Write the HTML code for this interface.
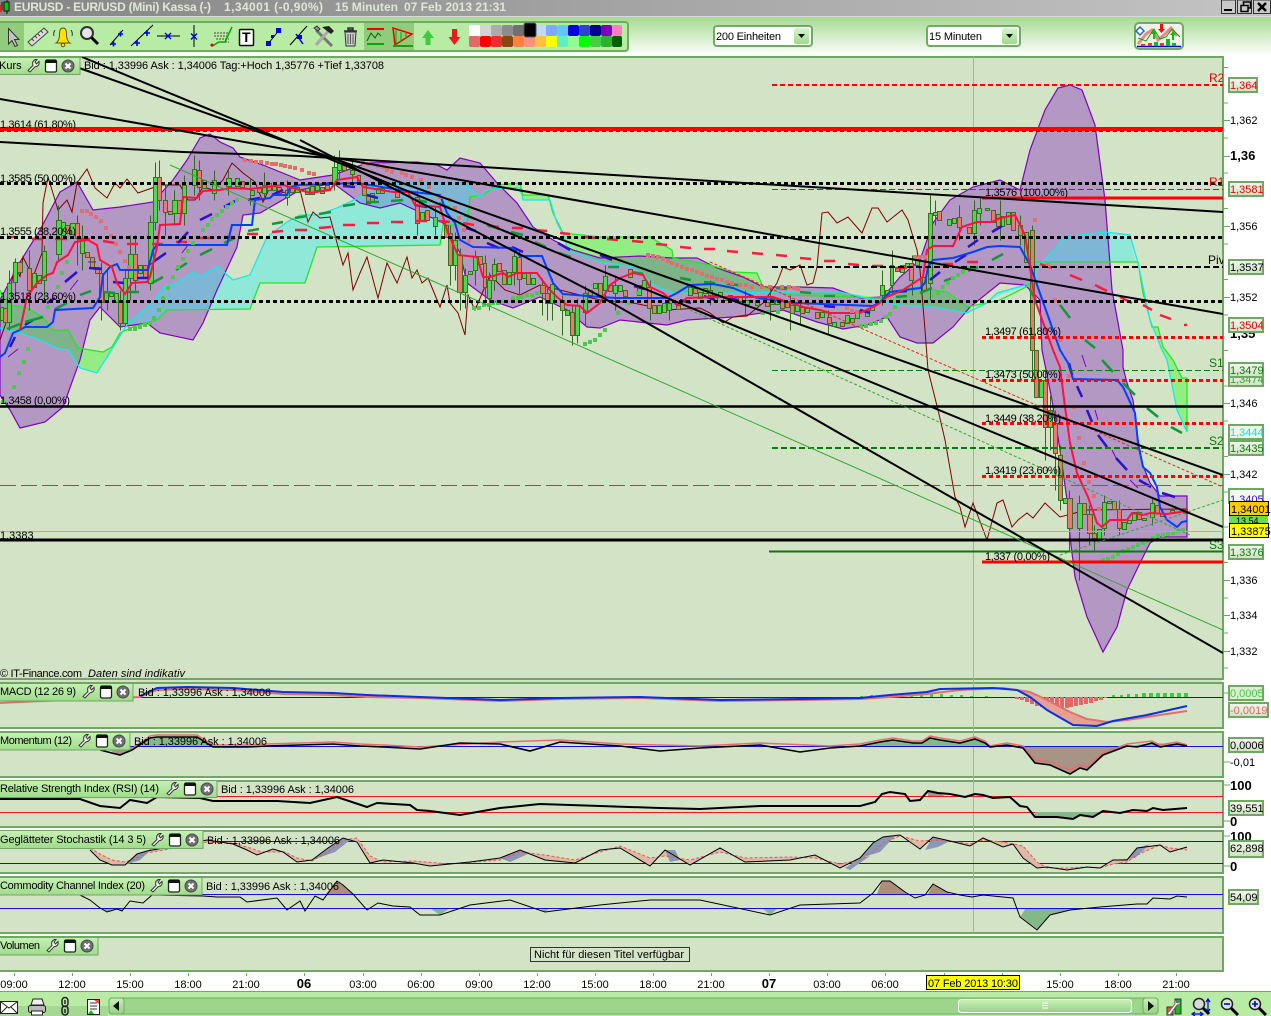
<!DOCTYPE html>
<html lang="de"><head><meta charset="utf-8"><title>EURUSD Chart</title>
<style>
html,body{margin:0;padding:0;background:#fff;overflow:hidden}
svg{display:block}
text{font-family:"Liberation Sans",sans-serif;font-size:11px;fill:#000}
.b{font-weight:bold;font-size:13px}
.box{fill:#d6e4ca;stroke:#6fa862;stroke-width:2}
.pl{fill:#d3e3c6;stroke:#6fa862;stroke-width:2}
.lab{fill:url(#lg);stroke:#6fa862;stroke-width:1}
.dot{fill:none;stroke:#000;stroke-width:3;stroke-dasharray:4 3}
.rd{fill:none;stroke:#f00;stroke-width:3;stroke-dasharray:4 3}
</style></head><body>
<svg xmlns="http://www.w3.org/2000/svg" width="1271" height="1016" viewBox="0 0 1271 1016">
<defs>
<linearGradient id="tg" x1="0" x2="1" y1="0" y2="0"><stop offset="0" stop-color="#858585"/><stop offset="1" stop-color="#c4c4c4"/></linearGradient>
<linearGradient id="tb" x1="0" x2="0" y1="0" y2="1"><stop offset="0" stop-color="#a6da90"/><stop offset="1" stop-color="#fff"/></linearGradient>
<linearGradient id="lg" x1="0" x2="0" y1="0" y2="1"><stop offset="0" stop-color="#c6f0b4"/><stop offset="1" stop-color="#a0dc8c"/></linearGradient>
<linearGradient id="bx" x1="0" x2="0" y1="0" y2="1"><stop offset="0" stop-color="#f4f8f0"/><stop offset="1" stop-color="#cfe0c2"/></linearGradient>
<linearGradient id="sc" x1="0" x2="0" y1="0" y2="1"><stop offset="0" stop-color="#c9f0b8"/><stop offset="1" stop-color="#95d283"/></linearGradient>
<linearGradient id="btn" x1="0" x2="0" y1="0" y2="1"><stop offset="0" stop-color="#d8f4cc"/><stop offset="1" stop-color="#9ed88a"/></linearGradient>
<clipPath id="mc"><rect x="0" y="57" width="1223" height="622"/></clipPath>
<polygon id="bb" points="0,300 20,262 40,230 60,192 77,182 93,210 120,207 153,202 173,180 187,160 200,138 210,134 220,142 233,148 240,157 263,165 300,180 333,175 367,163 417,162 437,165 447,170 460,158 480,163 497,183 517,203 533,227 553,240 573,250 600,258 640,256 673,258 697,258 717,268 743,277 763,287 800,287 833,288 860,298 883,297 900,277 920,260 933,223 950,200 973,187 1000,180 1020,190 1030,150 1045,110 1058,88 1070,85 1082,90 1095,125 1105,200 1112,290 1123,350 1123,367 1127,383 1133,400 1137,433 1142,463 1150,483 1160,496 1187,496 1187,537 1160,537 1150,543 1140,563 1127,590 1117,627 1103,652 1087,617 1075,577 1070,537 1068,507 1060,450 1052,400 1042,350 1040,300 1025,285 1000,283 970,307 953,327 933,343 917,343 900,337 887,317 867,325 843,329 817,322 783,310 733,317 687,320 667,325 620,320 600,328 587,327 567,310 540,297 513,308 490,300 467,283 460,253 443,223 400,203 380,208 360,203 333,183 300,190 260,213 243,215 237,247 217,290 203,323 193,340 160,333 147,323 120,327 100,307 90,320 80,360 63,407 45,422 20,428 10,410 0,395"/>
<clipPath id="bc"><use href="#bb"/></clipPath>
<path id="cg" d="M0 290L8 305 25 307 43 317 53 330 68 330 78 348 103 352 112 347 120 333 128 325 107 357 97 373 80 368 68 350 57 348 35 338 20 333 0 328ZM483 195L497 185 520 183 523 195 548 195 553 213 563 233 600 237 650 237 672 250 673 258 710 265 733 272 757 273 763 287 787 295 880 298 840 292 800 292 727 293 673 293 657 287 633 267 600 262 567 250 565 238 557 223 550 200 523 200 520 188 500 188 487 190ZM885 300L912 287 922 288 947 292 967 307 975 309 967 313 933 307 897 305ZM1138 262L1143 293 1152 327 1158 327 1163 347 1173 360 1182 378 1187 378 1187 432 1177 410 1167 360 1162 350 1150 320Z"/>
<path id="cc" d="M128 323L153 302 163 287 177 283 193 272 200 277 217 266 233 280 250 275 267 237 287 222 300 215 317 215 337 208 360 197 373 183 400 182 433 182 463 182 480 197 470 197 467 225 443 225 440 245 317 247 305 283 260 283 250 309 167 310 157 320 133 327ZM975 309L987 303 997 293 1025 285 1035 285 1040 265 1065 237 1105 232 1130 235 1135 260 1138 262 1035 262 1030 285 1000 295Z"/>
<g id="ic">
<path d="M1 11.5L6 6.5Q4.5 2 8.5 .5L10 .5 8 3 9.5 5 12 2.5Q13 7 8 7.8L3 13Z" fill="#f2f6ee" stroke="#333" stroke-width="1"/>
<rect x="18.5" y="1" width="11" height="12" rx="1.5" fill="#fff" stroke="#222" stroke-width="1.3"/><rect x="18.5" y="1" width="11" height="3" fill="#111"/>
<circle cx="41" cy="7" r="6" fill="#707070" stroke="#4a4a4a"/><path d="M38.5 4.5l5 5m0-5l-5 5" stroke="#fff" stroke-width="2"/>
</g>
</defs>

<!-- title bar -->
<rect x="0" y="0" width="1271" height="16" fill="url(#tg)"/>
<rect x="0" y="16" width="1271" height="1" fill="#d8d8d8"/>
<path d="M2 2v8" stroke="#111"/><rect x="0" y="5" width="2" height="7" fill="#e02020"/><path d="M7 0v14" stroke="#111"/><rect x="4" y="2" width="5" height="9" fill="#10c010" stroke="#111"/>
<text x="14" y="11" style="font-size:12px;font-weight:bold;fill:#dfe6d6" textLength="197">EURUSD - EUR/USD (Mini) Kassa (-)</text>
<text x="224" y="11" style="font-size:12px;font-weight:bold;fill:#dfe6d6" textLength="99">1,34001 (-0,90%)</text>
<text x="335" y="11" style="font-size:12px;font-weight:bold;fill:#dfe6d6" textLength="63">15 Minuten</text>
<text x="404" y="11" style="font-size:12px;font-weight:bold;fill:#dfe6d6" textLength="102">07 Feb 2013 21:31</text>
<g fill="#c8c8c8" stroke="#333" stroke-width="1">
<path d="M1221.500 0h14v13.500h-14z"/><path d="M1237.500 0h14v13.500h-14z"/><path d="M1253.500 0h17v13.500h-17z"/></g>
<path d="M1224 10h8" stroke="#000" stroke-width="2"/>
<path d="M1241 5.500h7v6h-7zM1243.500 5v-3h7v6h-2" fill="none" stroke="#000" stroke-width="1.500"/>
<path d="M1258 3l8 8m0-8l-8 8" stroke="#000" stroke-width="2.500"/>

<!-- toolbar -->
<rect x="0" y="17" width="1271" height="39" fill="url(#tb)"/>
<rect x="-4" y="22" width="632" height="29" rx="3" fill="#b8eca4" stroke="#72aa62" stroke-width="2"/>
<rect x="0" y="23" width="24" height="27" fill="#90cc7c"/>
<rect x="364" y="23" width="25" height="27" fill="#90cc7c"/><rect x="389" y="23" width="25" height="27" fill="#90cc7c"/>
<path d="M8.500 28.500V44l3.500-3.500 3 6 2.500-1-3-6H19Z" fill="#c4c4c4" stroke="#333"/>
<path d="M28 42L44 28l4 4-16 14Z" fill="#dcdcdc" stroke="#444"/><path d="M32 39l2 2M35 36l2 2M38 34l2 2M41 31l2 2" stroke="#444"/>
<path d="M56 43q3.500-2 3.500-9 0-6 3.500-6t3.500 6q0 7 3.500 9Z" fill="#ffe400" stroke="#665500"/><circle cx="63" cy="45" r="1.800" fill="#ffe400" stroke="#665500"/><path d="M55 30q-2 3-1 6M71 30q2 3 1 6" fill="none" stroke="#333"/>
<circle cx="87" cy="33" r="6" fill="#e6e6e6" stroke="#333" stroke-width="2"/><path d="M91.500 37.500L98 44" stroke="#000" stroke-width="3"/>
<path d="M110 45L123 30" stroke="#000"/><path d="M111 44h5m-2.500-2.500v5M118 34h5m-2.500-2.500v5" stroke="#00f" stroke-width="1.600"/>
<path d="M131 46L153 25" stroke="#000"/><path d="M134 43h6m-3-3v6M144 33h6m-3-3v6" stroke="#00f" stroke-width="1.600"/>
<path d="M157 36h23" stroke="#000"/><path d="M165 33l6 6m0-6l-6 6" stroke="#00f" stroke-width="1.400"/>
<path d="M194 25v22" stroke="#000"/><path d="M191 33.500l6 6m0-6l-6 6" stroke="#00f" stroke-width="1.400"/>
<path d="M214 33h15M214 36h15M216 39h13M222 42h7" stroke="#444" stroke-dasharray="2 1"/><path d="M211 45q1 2 3 0l5-3h6l7-15" fill="none" stroke="#0a0" stroke-width="1.500"/><circle cx="212" cy="45" r="1.500" fill="#e00"/>
<rect x="239.500" y="29.500" width="14" height="16" rx="1" fill="#fff" stroke="#111" stroke-width="1.500"/><text x="242" y="42" style="font-size:14px;font-weight:bold">T</text>
<path d="M268 44l12-15" stroke="#000"/><rect x="266" y="41" width="5" height="5" fill="#00d"/><rect x="276" y="28" width="5" height="5" fill="#00d"/><rect x="271" y="35" width="3" height="3" fill="#00d"/>
<path d="M290 45L307 26" stroke="#000"/><path d="M296 34L303 44" stroke="#00d" stroke-width="1.500"/><rect x="297" y="35" width="5" height="4" fill="#00d"/>
<path d="M316 30l16 16" stroke="#777" stroke-width="3"/><path d="M330 29L316 45" stroke="#aaa" stroke-width="3"/><path d="M322 27l7-1 5 5-3 3-4-3Z" fill="#222"/><path d="M314 28l4 3 2-2-3-3Z" fill="#999" stroke="#333"/>
<path d="M345 32h11l-1 14h-9Z" fill="#ccc" stroke="#333"/><path d="M344 31h13M348 28h5v2h-5z" fill="#999" stroke="#333" stroke-width="1.500"/><path d="M348 34v10M350.500 34v10M353 34v10" stroke="#555"/>
<path d="M367 29h17" stroke="#e00" stroke-width="2"/><path d="M367 44h17" stroke="#0a0" stroke-width="2"/><path d="M367 41l4-8 4 5 3-5 3 3" fill="none" stroke="#060"/>
<path d="M393 28l19 6-17 11Z" fill="none" stroke="#e00" stroke-width="1.500"/><path d="M393 46h20" stroke="#0a0" stroke-width="2"/><path d="M396 30v15M401 32v10M406 33v6" stroke="#0a0"/>
<path d="M428 30l6 8h-3.500v7h-5v-7H422Z" fill="#3ecb3e"/>
<path d="M452 29h5v8h3.500l-6 8-6-8h3.500Z" fill="#f01818"/>
<g>
<rect x="469" y="25" width="11" height="11" rx="2" fill="#fff"/><rect x="480" y="25" width="11" height="11" rx="2" fill="#d4d4d4"/><rect x="491" y="25" width="11" height="11" rx="2" fill="#acacac"/><rect x="502" y="25" width="11" height="11" rx="2" fill="#8c8c8c"/><rect x="513" y="25" width="11" height="11" rx="2" fill="#707070"/>
<rect x="535" y="25" width="11" height="11" rx="2" fill="#c4d8ff"/><rect x="546" y="25" width="11" height="11" rx="2" fill="#80a8ff"/><rect x="557" y="25" width="11" height="11" rx="2" fill="#60c8ff"/><rect x="568" y="25" width="11" height="11" rx="2" fill="#0000e0"/><rect x="579" y="25" width="11" height="11" rx="2" fill="#3040d0"/><rect x="590" y="25" width="11" height="11" rx="2" fill="#000090"/><rect x="601" y="25" width="11" height="11" rx="2" fill="#8000c0"/><rect x="612" y="25" width="10" height="11" rx="2" fill="#ff80c0"/>
<rect x="469" y="36" width="11" height="11" rx="2" fill="#e06868"/><rect x="480" y="36" width="11" height="11" rx="2" fill="#ff0000"/><rect x="491" y="36" width="11" height="11" rx="2" fill="#e83030"/><rect x="502" y="36" width="11" height="11" rx="2" fill="#8b4513"/><rect x="513" y="36" width="11" height="11" rx="2" fill="#ff8040"/><rect x="524" y="36" width="11" height="11" rx="2" fill="#ff9080"/><rect x="535" y="36" width="11" height="11" rx="2" fill="#ffc040"/><rect x="546" y="36" width="11" height="11" rx="2" fill="#ffff00"/><rect x="557" y="36" width="11" height="11" rx="2" fill="#60f0c0"/><rect x="568" y="36" width="11" height="11" rx="2" fill="#90ff90"/><rect x="579" y="36" width="11" height="11" rx="2" fill="#00ff00"/><rect x="590" y="36" width="11" height="11" rx="2" fill="#40d040"/><rect x="601" y="36" width="11" height="11" rx="2" fill="#30b030"/><rect x="612" y="36" width="10" height="11" rx="2" fill="#006000"/>
<rect x="524" y="23" width="12" height="14" rx="2" fill="#000" stroke="#555"/>
</g>
<rect x="714" y="26" width="98" height="20" rx="3" fill="#fff" stroke="#72aa62" stroke-width="2"/>
<text x="716" y="40" textLength="65">200 Einheiten</text>
<rect x="794" y="28" width="15" height="16" rx="2" fill="url(#btn)"/><path d="M798 34h7l-3.500 4Z" fill="#000"/>
<rect x="927" y="26" width="93" height="20" rx="3" fill="#fff" stroke="#72aa62" stroke-width="2"/>
<text x="929" y="40" textLength="53">15 Minuten</text>
<rect x="1002" y="28" width="15" height="16" rx="2" fill="url(#btn)"/><path d="M1006 34h7l-3.500 4Z" fill="#000"/>
<rect x="1135" y="23" width="48" height="26" rx="4" fill="#eef2ea" stroke="#72aa62" stroke-width="2"/>
<path d="M1138 44l8-10 6-4 6 10 7-6 6-6 6 8" fill="none" stroke="#e88" stroke-width="3"/><path d="M1138 38l8 3 8-12 6 10 6-2 6-8 8 8" fill="none" stroke="#0a0"/>
<path d="M1137 46.500h44" stroke="#00c" stroke-width="1.500"/><path d="M1141 44h4v2h-4zM1148 43h4v3h-4zM1160 43h4v3h-4z" fill="#e33"/><path d="M1154 42h4v4h-4zM1166 39h4v7h-4zM1172 43h4v3h-4z" fill="#1b1"/>
<path d="M1140 27l4 4-4 4-4-4Z" fill="#fff" stroke="#26c" stroke-width="1.500"/>
<path d="M1153 39v-5h-2l3-4 3 4h-2v5zM1172 40v-5h-2l3-4 3 4h-2v5z" fill="#1b1"/><path d="M1160 24h3v5h2l-3.500 4-3.500-4h2z" fill="#e11"/>

<!-- axis column -->
<rect x="1224" y="56" width="47" height="936" fill="#fff"/>
<!-- panels -->
<rect x="-2" y="57" width="1225" height="622" class="pl"/>
<rect x="-2" y="683" width="1225" height="45" class="pl"/>
<rect x="-2" y="732" width="1225" height="45" class="pl"/>
<rect x="-2" y="781" width="1225" height="46" class="pl"/>
<rect x="-2" y="831" width="1225" height="42" class="pl"/>
<rect x="-2" y="877" width="1225" height="56" class="pl"/>
<rect x="-2" y="937" width="1225" height="34" class="pl"/>
<rect x="0" y="680" width="1222" height="2" fill="#d3e3c6"/>
<path d="M973.500 57V933" stroke="#d89c8e"/>

<g clip-path="url(#mc)">
<!-- clouds -->
<use href="#cg" fill="#92ee82"/>
<use href="#cc" fill="#90e8d8"/>
<use href="#bb" fill="#b498c4"/>
<g clip-path="url(#bc)"><use href="#cg" fill="#7fb48a"/><use href="#cc" fill="#7fb6d6"/></g>
<use href="#bb" fill="none" stroke="#8000c0" stroke-width="1.200"/>
<!-- cloud edges -->
<g fill="none" stroke-width="1.300">
<polyline stroke="#22e822" points="0,290 8,305 25,307 43,317 53,330 68,330 78,348 103,352 112,347 120,333 133,327 157,320 167,310 250,309 260,283 305,283 317,247 440,245 443,225 467,225 470,197 483,195 497,185 520,183 523,195 548,195 553,213 563,233 600,237 650,237 672,250 673,258 710,265 733,272 757,273 763,287 787,295 880,298 912,287 922,288 947,292 967,307 1000,300 1030,285 1035,262 1138,262 1143,293 1152,327 1158,327 1163,347 1173,360 1182,378 1187,378 1187,432"/>
<polyline stroke="#18e8e8" points="0,328 20,333 35,338 57,348 68,350 80,368 97,373 107,357 128,323 153,302 163,287 177,283 193,272 200,277 217,266 233,280 250,275 267,237 287,222 300,215 317,215 337,208 360,197 373,183 463,182 480,197 487,190 500,188 520,188 523,200 550,200 557,223 565,238 567,250 600,262 633,267 657,287 673,293 727,293 800,292 840,292 897,305 933,307 967,313 987,303 997,293 1025,285 1040,265 1065,237 1105,232 1130,235 1138,263 1150,320 1162,350 1167,360 1177,410 1187,432"/>
</g>
<!-- chikou -->
<polyline fill="none" stroke="#800000" stroke-width="1" points="0,340 7,320 10,293 15,263 20,277 23,257 33,277 42,253 43,203 48,177 52,190 58,210 67,200 72,212 77,183 87,169 95,188 107,198 115,183 120,188 127,179 138,193 152,188 160,185 180,185 188,200 195,200 203,187 213,190 223,180 232,163 243,173 255,182 263,202 270,187 280,193 300,190 308,222 313,212 320,218 330,217 343,265 348,253 353,290 360,273 367,257 378,298 387,263 397,283 407,257 412,278 417,270 422,283 428,278 440,307 447,285 450,303 458,313 465,335 468,295 475,310 490,275 505,290 520,295 540,285 560,290 580,295 600,300 633,303 667,310 700,308 710,313 723,323 733,317 747,316 763,303 777,283 783,267 790,270 800,265 807,285 813,283 817,267 822,213 828,212 837,223 848,217 862,233 872,208 878,208 887,222 902,210 908,220 917,250 920,270 925,330 928,370 938,410 945,440 955,497 960,507 965,527 973,503 987,540 997,503 1003,500 1012,527 1018,520 1027,513 1033,518 1045,503 1060,517 1075,513 1085,510 1187,509"/>
<g transform="translate(.5 .5)">
<!-- wicks -->
<path fill="none" stroke="#2f6a1f" d="M9 270V330M15 258V300M29 250V310M44 245V300M58 205V262M77 215V265M82 225V270M101 262V320M107 270V310M120 290V330M125 270V325M130 235V300M135 235V290M150 215V290M155 162V230M159 160V210M165 185V235M174 190V225M184 175V225M194 155V195M199 160V200M214 170V200M228 170V195M250 178V205M264 172V200M287 180V205M334 155V190M339 150V178M352 160V185M417 190V235M435 205V235M450 225V285M455 232V280M460 248V310M465 268V308M475 250V285M485 255V300M489 272V310M494 258V290M514 250V285M519 250V295M542 278V315M547 285V320M552 278V320M562 295V335M572 305V345M577 298V343M585 285V325M605 265V300M615 275V310M650 280V320M669 295V320M710 280V305M745 290V315M770 288V320M790 295V330M800 300V325M828 310V335M882 270V305M892 250V295M912 255V295M930 195V300M935 200V225M959 205V240M974 200V245M980 198V225M1000 200V240M1020 215V245M1032 225V380M1045 370V460M1050 395V450M1055 410V490M1060 445V510M1069 490V550M1079 495V580M1089 505V545M1094 525V550M1104 495V535M1119 500V535M1152 497V525"/>
<!-- candle bodies -->
<path fill="#4fd84f" stroke="#3b6e20" d="M0 307h3v13h-3zM7 283h4v39h-4zM13 262h4v20h-4zM32 273h4v14h-4zM37 275h4v8h-4zM42 251h4v29h-4zM56 220h5v34h-5zM61 222h4v13h-4zM70 223h5v11h-5zM80 238h4v15h-4zM104 292h4v10h-4zM109 292h4v4h-4zM114 293h4v9h-4zM123 278h4v45h-4zM128 254h5v24h-5zM138 265h4v8h-4zM148 222h5v61h-5zM153 177h4v45h-4zM172 200h5v13h-5zM182 185h4v28h-4zM192 169h4v16h-4zM212 180h4v13h-4zM226 178h5v8h-5zM235 178h4v8h-4zM250 190h4v5h-4zM262 185h4v8h-4zM272 186h4v4h-4zM285 190h4v7h-4zM295 187h4v5h-4zM305 188h4v6h-4zM315 185h4v5h-4zM332 167h5v16h-5zM337 163h4v7h-4zM350 170h4v4h-4zM370 193h4v8h-4zM376 188h4v5h-4zM420 212h4v8h-4zM433 217h4v9h-4zM453 240h4v25h-4zM463 275h4v17h-4zM468 271h4v3h-4zM473 256h4v14h-4zM487 280h4v18h-4zM492 264h4v16h-4zM507 272h4v12h-4zM512 256h4v16h-4zM522 273h4v5h-4zM531 278h4v6h-4zM550 284h4v19h-4zM565 310h4v5h-4zM575 305h4v30h-4zM583 293h4v19h-4zM593 283h4v5h-4zM603 276h4v14h-4zM613 285h4v8h-4zM618 285h4v6h-4zM637 285h4v10h-4zM642 280h4v8h-4zM657 305h4v8h-4zM662 303h4v9h-4zM667 303h4v7h-4zM688 287h4v8h-4zM698 292h4v6h-4zM703 288h4v5h-4zM713 295h4v5h-4zM718 292h4v4h-4zM728 295h4v5h-4zM745 300h4v4h-4zM755 300h4v5h-4zM770 298h4v6h-4zM775 300h4v4h-4zM795 305h4v6h-4zM805 308h4v4h-4zM820 312h4v5h-4zM832 322h4v4h-4zM845 315h4v8h-4zM855 310h4v8h-4zM865 310h4v6h-4zM880 285h4v10h-4zM885 290h4v5h-4zM890 265h3v20h-3zM900 265h4v7h-4zM905 263h4v4h-4zM915 260h4v5h-4zM928 213h4v70h-4zM933 212h4v3h-4zM947 219h4v6h-4zM952 218h4v5h-4zM972 210h4v23h-4zM977 208h4v5h-4zM985 208h4v2h-4zM1001 216h3v10h-3zM1006 212h4v12h-4zM1024 232h4v30h-4zM1039 380h4v17h-4zM1048 410h4v17h-4zM1063 498h4v5h-4zM1077 503h5v25h-5zM1097 529h4v10h-4zM1102 502h4v26h-4zM1107 501h4v2h-4zM1122 522h4v7h-4zM1127 520h4v3h-4zM1132 512h4v8h-4zM1142 518h4v2h-4zM1150 503h4v14h-4zM1183 509h4v4h-4z"/>
<path fill="#e87a6e" stroke="#3b6e20" d="M3 308h4v14h-4zM17 262h5v10h-5zM27 268h4v22h-4zM65 225h4v8h-4zM75 223h4v15h-4zM85 252h4v5h-4zM90 257h4v10h-4zM95 267h4v6h-4zM99 273h4v29h-4zM118 302h4v21h-4zM133 254h4v26h-4zM143 265h4v12h-4zM157 177h4v23h-4zM163 200h4v12h-4zM168 211h4v3h-4zM177 200h4v13h-4zM197 170h4v17h-4zM202 180h4v8h-4zM240 181h4v6h-4zM257 188h4v4h-4zM267 183h4v7h-4zM277 187h4v6h-4zM290 188h4v4h-4zM310 186h4v8h-4zM320 187h4v6h-4zM325 185h4v4h-4zM342 163h4v7h-4zM357 175h3v8h-3zM362 183h4v12h-4zM366 195h4v8h-4zM380 188h4v5h-4zM395 190h4v7h-4zM415 197h4v26h-4zM425 210h4v10h-4zM444 225h4v12h-4zM448 233h4v32h-4zM457 255h5v37h-5zM478 256h4v8h-4zM483 263h3v24h-3zM497 263h4v8h-4zM502 270h4v14h-4zM517 257h4v22h-4zM526 272h4v12h-4zM540 285h5v8h-5zM545 293h4v10h-4zM560 300h4v10h-4zM570 312h4v23h-4zM588 290h4v5h-4zM598 283h4v12h-4zM608 285h4v6h-4zM623 290h4v6h-4zM628 269h4v8h-4zM647 287h4v21h-4zM652 305h4v8h-4zM676 305h4v4h-4zM693 288h4v5h-4zM708 290h4v5h-4zM723 296h4v4h-4zM738 297h4v4h-4zM765 302h4v4h-4zM780 300h4v8h-4zM785 302h4v5h-4zM790 305h4v8h-4zM800 307h4v6h-4zM815 312h4v6h-4zM827 317h4v6h-4zM840 322h4v4h-4zM850 318h4v4h-4zM870 305h4v5h-4zM895 267h4v4h-4zM909 263h4v17h-4zM922 277h4v13h-4zM937 211h4v9h-4zM957 217h4v10h-4zM967 227h4v6h-4zM991 210h4v12h-4zM996 214h4v12h-4zM1011 212h4v18h-4zM1018 225h4v10h-4zM1030 230h4v120h-4zM1034 350h4v47h-4zM1043 380h4v47h-4zM1053 423h4v30h-4zM1058 455h4v45h-4zM1067 498h5v30h-5zM1082 503h4v11h-4zM1087 514h5v19h-5zM1092 533h4v5h-4zM1112 501h4v8h-4zM1117 509h4v19h-4zM1137 512h4v7h-4zM1155 505h4v8h-4zM1160 513h4v3h-4zM1170 510h4v3h-4z"/>
</g>
<!-- thin purple dashes -->
<path stroke="#8000c0" fill="none" d="M8 357L18 349M70 290L78 280M88 262L96 262M150 265L158 258M182 253L188 245M1082 355L1086 367M1095 410L1098 420M1112 450L1116 458M1130 480L1138 488"/>
<!-- red ma dashes -->
<path fill="none" stroke="#ff1a40" stroke-width="2.500" d="M7 237H18M32 239H43M55 239H67M78 239H90M103 241L115 243M127 244H138M152 244H163M176 242H187M200 238H211M224 237H235M247 234H258M272 232L283 231M295 230H307M319 228L331 227M343 225H355M367 223H379M391 222H403M415 221H427M439 221L450 222M463 223L474 225M488 226L499 227M512 228H523M535 230L547 231M560 233L570 234M583 237L595 238M607 239L618 240M632 241L643 242M656 244L667 245M680 247L691 248M704 249H715M727 251L738 252M752 253L763 254M776 255L787 256M800 258L811 259M824 261H835M848 264L859 265M872 266H883M896 268H907M943 264H953M967 262H978M1040 264L1052 268M1070 275L1082 280M1095 285L1107 291M1120 297L1132 303M1143 305L1152 310M1160 315L1171 319M1184 325H1187"/>
<!-- blue dashes -->
<path fill="none" stroke="#3010c8" stroke-width="2.500" d="M10 347L15 337M25 325L33 320M47 303L55 298M65 282L77 272M89 268L102 269M113 282L124 283M137 278L149 278M153 262L166 253M178 243L188 232M200 220L212 214M224 207L235 201M248 200L260 198M272 195L283 190M319 185L331 183M343 186L355 187M367 195L378 198M415 205L427 207M466 228L476 231M487 243L499 248M512 247L523 252M558 243L570 250M600 255L612 260M634 286L645 289M680 300L691 303M704 296L715 300M727 298L738 300M824 306L835 307M860 310L870 313M896 292L907 291M930 280L940 272M955 262L966 255M968 247L978 240M992 232L1002 226M1069 363L1072 375M1077 386L1082 397M1087 410L1092 422M1098 435L1107 447M1116 458L1127 470M1139 480L1151 487M1162 493L1175 497"/>
<!-- green dashes -->
<path fill="none" stroke="#14963a" stroke-width="2.500" d="M7 329L20 324M25 322L43 317M55 309L67 303M80 295L91 291M104 292L115 293M128 292L139 292M152 283L163 277M176 270L187 263M200 255L212 249M224 243L235 238M248 231L259 229M272 224L283 222M295 218L307 216M319 214L331 212M343 206L355 204M367 202H379M391 201L403 200M416 200L427 202M439 203L450 208M464 215L475 219M487 225L499 229M511 232L523 235M535 242L546 247M559 253L571 257M608 267H619M632 272L643 274M680 278L691 280M704 282L715 283M727 284L738 285M776 288L787 289M800 292L811 293M824 296H835M896 297L907 296M920 293L932 288M944 281L955 277M968 271L978 267M992 260L1003 254M1030 290L1036 300M1060 305L1070 318M1085 340L1095 348M1102 360L1113 372M1123 383L1135 395M1147 408L1158 417M1171 427L1182 433"/>
<!-- ma lines -->
<polyline fill="none" stroke="#0040ff" stroke-width="2" points="0,357 5,353 13,333 20,330 25,327 47,327 53,322 55,310 93,308 100,297 103,275 110,267 117,264 120,270 148,270 153,250 157,245 227,245 232,225 252,225 255,200 270,198 273,195 287,195 290,187 300,185 357,183 413,192 440,195 447,213 455,223 460,240 473,247 513,248 520,256 542,256 553,283 563,294 600,297 617,298 667,298 677,293 690,285 713,284 733,288 757,298 797,303 873,306 880,302 890,292 920,288 925,283 928,267 933,260 953,258 973,252 987,247 1000,246 1020,247 1030,265 1060,350 1068,363 1073,379 1117,380 1123,387 1130,402 1135,413 1138,443 1143,467 1150,473 1157,487 1160,507 1167,520 1177,527 1182,522 1187,521"/>
<polyline fill="none" stroke="#ff1040" stroke-width="2" points="20,330 27,297 37,283 47,275 53,273 57,262 68,255 75,242 88,240 97,245 100,260 112,267 117,283 125,294 132,283 147,282 150,277 157,247 160,225 180,224 183,197 197,198 203,191 220,190 230,188 250,189 283,185 300,190 310,193 330,190 337,180 357,177 363,187 393,192 408,192 415,205 440,207 448,233 458,255 477,257 483,277 490,277 503,273 508,277 517,273 537,273 548,288 557,297 567,305 580,306 587,313 600,303 610,285 620,278 633,273 643,275 650,287 663,293 677,305 687,298 713,297 750,297 773,297 803,307 820,310 830,313 860,313 877,305 887,297 903,290 923,277 927,250 933,246 953,246 962,227 977,222 992,222 1000,218 1015,215 1025,235 1035,300 1053,350 1060,367 1065,407 1070,443 1077,473 1088,497 1097,523 1102,527 1110,520 1127,520 1132,513 1143,515 1150,513 1167,514 1187,511"/>
<!-- PSAR squares -->
<path fill="none" stroke="#4cc84c" stroke-width="4" d="M1 402h4M12 387h4M17 373h4M22 362h4M26 349h4M46 307h4M56 287h4M60 273h4M65 262h4M128 329h4M133 329h4M138 327h4M143 325h4M148 323h4M152 318h4M157 310h4M161 298h4M166 288h4M171 277h4M176 267h4M181 259h4M186 251h4M191 243h4M196 237h4M201 230h4M206 225h4M210 219h4M215 215h4M220 211h4M225 207h4M230 203h4M235 200h4M472 308h4M477 308h4M482 305h4M487 305h4M491 303h4M496 303h4M501 302h4M511 298h4M516 298h4M520 297h4M525 295h4M530 295h4M535 293h4M583 344h4M588 342h4M593 340h4M598 335h4M603 330h4M616 313h4M626 303h4M636 293h4M761 313h4M766 312h4M776 312h4M859 326h4M864 326h4M869 324h4M874 323h4M879 321h4M884 317h4M888 314h4M893 307h4M936 293h4M941 287h4M946 283h4M951 278h4M956 275h4M961 272h4M966 268h4M1101 560h4M1106 559h4M1111 557h4M1116 554h4M1121 551h4M1126 549h4M1131 547h4M1136 545h4M1141 543h4M1146 541h4M1151 538h4M1156 536h4M1161 535h4M1166 534h4M1171 533h4M1176 531h4M1181 530h4"/>
<path fill="none" stroke="#e07070" stroke-width="4" d="M80 211h4M85 211h4M89 214h4M94 217h4M99 221h4M104 228h4M109 236h4M114 244h4M118 252h4M123 261h4M127 267h4M243 160h4M249 161h4M254 162h4M259 162h4M265 163h4M270 164h4M274 164h4M279 165h4M283 166h4M288 167h4M293 168h4M300 170h4M307 173h4M312 174h4M361 163h4M366 164h4M376 166h4M381 167h4M385 170h4M390 172h4M400 173h4M404 175h4M410 177h4M419 180h4M427 187h4M438 197h4M448 200h4M453 208h4M457 218h4M462 230h4M467 241h4M646 255h4M651 256h4M656 257h4M661 259h4M666 261h4M670 263h4M675 265h4M680 267h4M685 269h4M690 270h4M695 272h4M700 274h4M705 276h4M710 277h4M715 279h4M720 280h4M725 282h4M730 283h4M738 285h4M744 285h4M750 287h4M760 287h4M768 287h4M780 287h4M787 287h4M792 288h4M796 289h4M845 308h4M850 311h4M855 312h4M913 257h4M918 257h4M923 257h4M1033 220h4M1046 265h4M1053 300h4M1058 340h4M1067 376h4M1072 407h4M1077 438h4M1082 463h4M1087 482h4M1092 496h4M1097 509h4"/>
<!-- horizontal levels -->
<path d="M0 485.500H1223" fill="none" stroke="#a04a40" stroke-dasharray="16 5"/>
<path d="M0 531.500H1223" fill="none" stroke="#d89c8e"/>
<path d="M0 131H1223" fill="none" stroke="#000" stroke-width="1.500" stroke-dasharray="4 3"/>
<path d="M0 129H1223" fill="none" stroke="#f00" stroke-width="4"/>
<path d="M0 183.500H1223M0 237.500H1223M0 301.500H1223" class="dot"/>
<path d="M772 85H1223" fill="none" stroke="#f00" stroke-width="2" stroke-dasharray="5 3"/>
<path d="M772 189.500H1223" fill="none" stroke="#f00" stroke-dasharray="6 3"/>
<path d="M982 198H1223" fill="none" stroke="#f00" stroke-width="3"/>
<path d="M772 267H1223" fill="none" stroke="#000" stroke-width="2" stroke-dasharray="6 3"/>
<path d="M982 337.500H1223M982 380.500H1223M982 423.500H1223M982 476.500H1223" class="rd"/>
<path d="M772 370.500H1223" fill="none" stroke="#0a7a0a" stroke-dasharray="6 3"/>
<path d="M772 448H1223" fill="none" stroke="#0a7a0a" stroke-width="2" stroke-dasharray="6 3"/>
<path d="M769 551.500H1223" fill="none" stroke="#0a7a0a" stroke-width="2"/>
<path d="M982 562H1223" fill="none" stroke="#f00" stroke-width="3"/>
<path d="M0 406.500H1223" fill="none" stroke="#000" stroke-width="2.500"/>
<path d="M0 540H1223" fill="none" stroke="#000" stroke-width="3"/>
<!-- thin trend lines -->
<path d="M170 165L1223 630" fill="none" stroke="#34a834"/>
<path d="M690 310L1190 535" fill="none" stroke="#34a834" stroke-dasharray="3 2"/>
<path d="M1060 555L1223 500" fill="none" stroke="#34a834" stroke-dasharray="3 2"/>
<path d="M710 262L1223 487" fill="none" stroke="#f02020" stroke-dasharray="3 2"/>
<!-- black trend lines -->
<g fill="none" stroke="#000" stroke-width="2">
<path d="M0 99L1223 314"/>
<path d="M0 142L183 152 300 156 1223 212"/>
<path d="M68 64L1223 475"/>
<path d="M82 57L1223 527"/>
<path d="M300 140L600 296 1223 653"/>
</g>
<!-- labels -->
<text x="0" y="128" textLength="76">1,3614 (61,80%)</text>
<text x="0" y="182" textLength="76">1,3585 (50,00%)</text>
<text x="0" y="235" textLength="76">1,3555 (38,20%)</text>
<text x="0" y="300" textLength="76">1,3518 (23,60%)</text>
<text x="0" y="404" textLength="70">1,3458 (0,00%)</text>
<text x="0" y="539">1,3383</text>
<text x="985" y="196" textLength="83">1,3576 (100,00%)</text>
<text x="985" y="335" textLength="76">1,3497 (61,80%)</text>
<text x="985" y="378" textLength="76">1,3473 (50,00%)</text>
<text x="985" y="422" textLength="76">1,3449 (38,20%)</text>
<text x="985" y="474" textLength="76">1,3419 (23,60%)</text>
<text x="985" y="560" textLength="65">1,337 (0,00%)</text>
<text x="1209" y="82" style="font-size:12px;fill:#e00">R2</text>
<text x="1209" y="186" style="font-size:12px;fill:#e00">R1</text>
<text x="1208" y="264" style="font-size:12px">Piv</text>
<text x="1209" y="367" style="font-size:12px;fill:#0a7a0a">S1</text>
<text x="1209" y="445" style="font-size:12px;fill:#0a7a0a">S2</text>
<text x="1209" y="549" style="font-size:12px;fill:#0a7a0a">S3</text>
<text x="0" y="677" textLength="82">© IT-Finance.com</text>
<text x="88" y="677" style="font-style:italic" textLength="97">Daten sind indikativ</text>
</g>

<!-- MACD -->
<path d="M0 697.500H1223" stroke="#1010e0" fill="none"/>
<path d="M1015 697h4v2h-4zM1020 697h4v3h-4zM1025 697h4v5h-4zM1030 697h4v7h-4zM1035 697h4v9h-4zM1040 697h4v10h-4zM1045 697h4v11h-4zM1050 697h4v11h-4zM1055 697h4v12h-4zM1060 697h4v12h-4zM1065 697h4v11h-4zM1069 697h4v10h-4zM1074 697h4v9h-4zM1079 697h4v8h-4zM1084 697h4v7h-4zM1089 697h4v6h-4zM1094 697h4v4h-4zM1099 697h4v3h-4zM1104 697h3v1h-3z" fill="#e06868"/>
<path d="M860 696h3v1h-3zM870 695h3v2h-3zM880 695h3v2h-3zM890 695h3v2h-3zM900 695h3v2h-3zM910 695h3v2h-3zM920 694h3v3h-3zM930 694h3v3h-3zM940 694h3v3h-3zM950 695h3v2h-3zM960 695h3v2h-3zM970 696h3v1h-3zM985 696h3v1h-3zM1112 695h3v2h-3zM1120 695h3v2h-3zM1127 694h3v3h-3zM1135 694h3v3h-3zM1142 693h4v4h-4zM1149 693h4v4h-4zM1156 693h4v4h-4zM1163 693h4v4h-4zM1170 693h4v4h-4zM1177 693h4v4h-4zM1184 693h4v4h-4z" fill="#44c844"/>
<path fill="#e8a090" d="M1017 690L1030 692 1043 698 1070 712 1087 719 1107 722 1097 726 1073 725 1047 710 1030 697Z"/>
<polyline fill="none" stroke="#e07070" stroke-width="2" points="0,703 20,702 140,697 157,690 187,689 233,690 283,694 333,695 367,697 420,698 500,701 560,699 640,698 720,701 800,700 860,699 890,697 927,694 960,690 1003,688 1030,692 1043,698 1070,712 1087,719 1107,722 1127,720 1160,715 1187,711"/>
<polyline fill="none" stroke="#0a30e0" stroke-width="2" points="140,696 157,688 187,687 233,688 283,692 333,693 367,695 420,697 500,700 560,698 640,697 720,700 800,699 860,698 890,695 927,692 940,689 993,688 1017,690 1030,697 1047,710 1073,725 1097,726 1113,721 1147,715 1187,706"/>

<!-- Momentum -->
<path fill="#84b888" d="M133 746L150 738 157 737 177 737 197 737 213 746ZM860 746L880 742 893 740 923 743 930 738 960 743 975 739 990 746ZM1127 746L1152 743 1177 744 1187 746Z"/>
<path fill="#a89484" d="M100 746L120 755 132 750 133 746ZM1023 746L1035 763 1050 765 1070 774 1080 768 1087 770 1103 755 1127 746Z"/>
<path d="M0 746.500H1223" stroke="#1010e0" fill="none"/>
<polyline fill="none" stroke="#e07070" stroke-width="1.500" points="133,748 150,736 157,735 177,735 197,735 213,745 247,745 267,744 300,743 333,742 360,744 383,745 420,747 500,742 560,740 620,744 700,746 760,743 830,746 860,744 880,740 893,738 913,741 922,741 930,736 940,738 960,741 975,737 985,741 990,746 1007,743 1023,746 1035,760 1050,762 1070,770 1080,765 1087,767 1103,753 1127,744 1152,741 1160,745 1177,742 1187,745"/>
<polyline fill="none" stroke="#000" stroke-width="1.600" points="100,750 120,755 132,750 150,738 157,737 177,737 197,737 213,747 247,747 267,746 300,745 333,744 360,746 383,747 420,749 460,743 500,744 530,751 560,742 620,746 660,751 700,748 760,745 800,752 830,748 860,746 880,742 893,740 913,743 922,743 930,738 940,740 960,743 975,739 985,743 990,747 1007,745 1023,748 1035,763 1050,765 1070,774 1080,768 1087,770 1103,755 1127,746 1137,747 1152,743 1160,747 1177,744 1187,746"/>

<!-- RSI -->
<path d="M0 796.500H1223M0 812.500H1223" stroke="#f01818" fill="none"/>
<path fill="#84b888" d="M1035 812L1035 817 1057 817 1073 819 1080 815 1093 817 1103 812Z"/>
<path fill="#a89484" d="M928 796L928 791 938 793 945 796Z"/>
<polyline fill="none" stroke="#000" stroke-width="2" points="0,799 30,799 80,799 100,806 120,808 130,800 147,803 157,797 200,798 213,801 250,801 277,801 310,803 337,797 367,807 377,803 410,805 417,810 430,811 460,815 500,808 540,804 600,806 660,808 700,809 760,806 800,806 860,806 875,802 882,794 890,792 905,794 910,801 920,800 928,791 938,793 950,794 965,797 975,794 983,795 993,798 1010,797 1020,806 1027,807 1035,817 1057,817 1073,819 1080,815 1093,817 1103,811 1120,813 1133,810 1147,811 1153,808 1163,810 1187,808"/>

<!-- Stoch -->
<path d="M0 841.500H1223M0 863.500H1223" stroke="#1010e0" fill="none"/>
<polygon fill="#dfb9a6" points="90,850 100,860 112,865 125,865 137,854 147,851 207,840 233,844 247,850 257,855 273,849 283,852 297,862 312,860 328,848 343,838 357,842 370,863 383,860 413,863 430,866 470,862 500,858 520,850 545,860 575,863 600,850 620,848 650,866 665,850 690,865 720,848 745,862 790,860 815,855 840,868 860,858 873,843 883,837 900,835 920,849 933,837 950,841 970,846 983,838 1003,847 1013,844 1023,858 1037,868 1047,867 1067,870 1087,867 1100,868 1113,860 1127,860 1137,848 1160,845 1170,852 1187,847 1187,850 1170,848 1160,845 1137,855 1127,862 1113,864 1100,868 1087,867 1067,868 1047,868 1037,862 1023,846 1003,842 983,840 970,844 950,841 933,840 920,841 900,836 883,843 873,852 860,860 840,864 815,858 790,857 745,858 720,852 690,860 665,856 650,858 620,846 600,852 575,860 545,855 520,852 500,860 450,864 413,861 383,862 370,856 357,838 343,840 328,852 312,861 297,858 285,852 262,852 247,847 233,843 207,842 147,853 137,858 125,862 112,860 100,854 90,848"/>
<path fill="#8898b8" d="M125 865L137 854 147 851 155 846 140 860ZM312 860L328 848 343 838 350 840 335 852ZM860 858L873 843 883 837 895 836 880 852ZM925 850L933 837 950 841 938 847ZM1113 860L1127 860 1137 848 1150 844 1135 858ZM845 868L860 858 870 856 850 870ZM500 858L520 850 530 853 510 862ZM665 850L675 850 680 860 670 862Z"/>
<polyline fill="none" stroke="#e85858" stroke-dasharray="3 2" points="90,848 100,854 112,860 125,862 137,858 147,853 207,842 233,843 247,847 262,852 285,852 297,858 312,861 328,852 343,840 357,838 370,856 383,862 413,861 450,864 500,860 520,852 545,855 575,860 600,852 620,846 650,858 665,856 690,860 720,852 745,858 790,857 815,858 840,864 860,860 873,852 883,843 900,836 920,841 933,840 950,841 970,844 983,840 1003,842 1023,846 1037,862 1047,868 1067,868 1087,867 1100,868 1113,864 1127,862 1137,855 1160,845 1170,848 1187,850"/>
<polyline fill="none" stroke="#000" points="90,850 100,860 112,865 125,865 137,854 147,851 207,840 233,844 247,850 257,855 273,849 283,852 297,862 312,860 328,848 343,838 357,842 370,863 383,860 413,863 430,866 470,862 500,858 520,850 545,860 575,863 600,850 620,848 650,866 665,850 690,865 720,848 745,862 790,860 815,855 840,868 860,858 873,843 883,837 900,835 920,849 933,837 950,841 970,846 983,838 1003,847 1013,844 1023,858 1037,868 1047,867 1067,870 1087,867 1100,868 1113,860 1127,860 1137,848 1160,845 1170,852 1187,847"/>

<!-- CCI -->
<path fill="#84b888" d="M100 908L107 912 117 909 122 911 125 908ZM430 908L440 915 450 908ZM540 908L545 912 550 908ZM762 908L770 915 778 908ZM1026 908L1020 917 1037 930 1050 915 1060 912 1070 910 1085 908Z"/>
<path fill="#ab8f7c" d="M326 894L337 881 343 885 353 894ZM877 894L882 881 890 881 905 892 907 894ZM928 894L933 884 947 892 950 894Z"/>
<path d="M0 894.500H1223M0 908.500H1223" stroke="#1010e0" fill="none"/>
<polyline fill="none" stroke="#000" points="80,895 90,900 100,908 107,912 117,909 122,911 130,901 143,903 152,895 203,896 217,897 240,897 247,902 277,898 287,910 300,901 305,911 315,896 323,900 337,881 343,885 353,894 367,910 378,903 393,906 410,907 420,915 440,915 470,905 510,900 545,912 600,905 650,900 700,900 770,915 800,905 860,903 873,893 882,881 890,881 905,892 915,898 925,895 933,884 947,892 960,895 972,897 983,895 1003,897 1013,898 1020,917 1037,930 1050,915 1070,910 1100,907 1137,904 1147,904 1153,898 1170,899 1177,896 1187,897"/>

<!-- pane labels -->
<rect x="-2" y="57.500" width="82" height="17" class="lab"/><text x="-1" y="69">Kurs</text><use href="#ic" x="27" y="59"/>
<text x="84" y="69" textLength="300">Bid : 1,33996 Ask : 1,34006 Tag:+Hoch 1,35776 +Tief 1,33708</text>
<rect x="-2" y="683.500" width="135" height="17.500" class="lab"/><text x="0" y="695" textLength="76">MACD (12 26 9)</text><use href="#ic" x="82" y="685"/>
<text x="138" y="696" textLength="133">Bid : 1,33996 Ask : 1,34006</text>
<rect x="-2" y="732.500" width="132" height="17.500" class="lab"/><text x="0" y="744" textLength="72">Momentum (12)</text><use href="#ic" x="78" y="734"/>
<text x="134" y="745" textLength="133">Bid : 1,33996 Ask : 1,34006</text>
<rect x="-2" y="780.500" width="219" height="17" class="lab"/><text x="0" y="792" textLength="159">Relative Strength Index (RSI) (14)</text><use href="#ic" x="166" y="782"/>
<text x="221" y="793" textLength="133">Bid : 1,33996 Ask : 1,34006</text>
<rect x="-2" y="830.500" width="205" height="18" class="lab"/><text x="0" y="843" textLength="146">Geglätteter Stochastik (14 3 5)</text><use href="#ic" x="151" y="833"/>
<text x="207" y="844" textLength="133">Bid : 1,33996 Ask : 1,34006</text>
<rect x="-2" y="877.500" width="204" height="17.500" class="lab"/><text x="0" y="889" textLength="145">Commodity Channel Index (20)</text><use href="#ic" x="150" y="879"/>
<text x="206" y="890" textLength="133">Bid : 1,33996 Ask : 1,34006</text>
<rect x="-2" y="937.500" width="100" height="17.500" class="lab"/><text x="0" y="949" textLength="40">Volumen</text><use href="#ic" x="46" y="939"/>
<rect x="530.500" y="947.500" width="159" height="14" fill="#d3e3c6" stroke="#333"/><text x="534" y="958" textLength="150">Nicht für diesen Titel verfügbar</text>

<!-- axis ticks -->
<path d="M1224 67.500h4M1224 103h4M1224 120.500h6M1224 138h4M1224 156.500h6M1224 173h4M1224 208.500h4M1224 226.500h6M1224 244h4M1224 279.500h4M1224 297.500h6M1224 315h4M1224 350.500h4M1224 386h4M1224 403.500h6M1224 421h4M1224 456.500h4M1224 474.500h6M1224 492h4M1224 527h4M1224 562.500h4M1224 580.500h6M1224 598h4M1224 615.500h6M1224 633h4M1224 651.500h6M1224 668h4M1224 693h4M1224 762h6M1224 785h6M1224 821h6M1224 836h6M1224 866h6" stroke="#6fa862" fill="none"/>
<text x="1230" y="124">1,362</text><text x="1230" y="160" class="b">1,36</text><text x="1230" y="230">1,356</text><text x="1230" y="301">1,352</text><text x="1230" y="338" class="b">1,35</text>
<text x="1230" y="407">1,346</text><text x="1230" y="478">1,342</text><text x="1230" y="584">1,336</text><text x="1230" y="619">1,334</text><text x="1230" y="655">1,332</text>
<rect x="1229" y="78" width="28" height="14" class="box" style="fill:url(#bx)"/><text x="1230" y="89" style="fill:#e00">1,364</text>
<rect x="1229" y="182" width="34" height="14" class="box" style="fill:url(#bx)"/><text x="1230" y="193" style="fill:#e00">1,3581</text>
<rect x="1229" y="260" width="34" height="14" class="box" style="fill:url(#bx)"/><text x="1230" y="271">1,3537</text>
<rect x="1229" y="318" width="34" height="14" class="box" style="fill:url(#bx)"/><text x="1230" y="329" style="fill:#e00">1,3504</text>
<rect x="1229" y="372" width="34" height="14" class="box" style="fill:url(#bx)"/><text x="1230" y="383" style="fill:#2fa82f">1,3474</text>
<rect x="1229" y="363" width="34" height="14" class="box" style="fill:url(#bx)"/><text x="1230" y="374" style="fill:#0a7a0a">1,3479</text>
<rect x="1229" y="425" width="34" height="14" class="box" style="fill:#eef5e8"/><text x="1230" y="436" style="fill:#00e8e8">1,3444</text>
<rect x="1229" y="441" width="34" height="14" class="box" style="fill:url(#bx)"/><text x="1230" y="452" style="fill:#0a7a0a">1,3435</text>
<rect x="1229" y="489" width="34" height="14" class="box" style="fill:#f4f8f0"/><text x="1230" y="503" style="fill:#3010c8">1,3405</text>
<rect x="1229" y="515" width="39" height="11" fill="#66dd55"/><text x="1236" y="524" style="font-size:9px">13 54</text>
<rect x="1229.500" y="501.500" width="39" height="14" fill="#ffcc00" stroke="#000"/><text x="1231" y="513">1,34001</text>
<rect x="1229.500" y="523.500" width="39" height="14" fill="#ffff00" stroke="#000"/><text x="1231" y="535">1,33875</text>
<rect x="1229" y="545" width="34" height="14" class="box" style="fill:url(#bx)"/><text x="1230" y="556" style="fill:#0a7a0a">1,3376</text>
<rect x="1229" y="686" width="34" height="14" class="box" style="fill:#dceed0"/><text x="1230" y="697" style="fill:#44c844">0,0005</text>
<rect x="1229" y="703" width="39" height="14" class="box" style="fill:url(#bx)"/><text x="1230" y="714" style="fill:#e06868">-0,0019</text>
<rect x="1229" y="738" width="34" height="14" class="box" style="fill:url(#bx)"/><text x="1230" y="749">0,0006</text>
<text x="1230" y="766">-0,01</text><text x="1230" y="790" class="b">100</text>
<rect x="1229" y="801" width="34" height="14" class="box" style="fill:url(#bx)"/><text x="1230" y="812">39,551</text>
<text x="1230" y="826" class="b">0</text><text x="1230" y="841" class="b">100</text>
<rect x="1229" y="841" width="34" height="16" class="box" style="fill:url(#bx)"/><text x="1230" y="852">62,898</text>
<text x="1230" y="871" class="b">0</text>
<rect x="1229" y="890" width="29" height="14" class="box" style="fill:url(#bx)"/><text x="1230" y="901">54,09</text>

<!-- time axis -->
<rect x="0" y="972" width="1271" height="19" fill="#fff"/>
<path d="M14.500 973v3M72.500 973v3M130.500 973v3M188.500 973v3M246.500 973v3M304.500 973v3M363.500 973v3M421.500 973v3M479.500 973v3M537.500 973v3M595.500 973v3M653.500 973v3M711.500 973v3M769.500 973v3M827.500 973v3M885.500 973v3M944.500 973v3M1002.500 973v3M1060.500 973v3M1118.500 973v3M1176.500 973v3" stroke="#6fa862" fill="none"/>
<g text-anchor="middle" id="tm">
<text x="14" y="988">09:00</text><text x="72" y="988">12:00</text><text x="130" y="988">15:00</text><text x="188" y="988">18:00</text><text x="246" y="988">21:00</text><text x="304" y="988" class="b">06</text><text x="363" y="988">03:00</text><text x="421" y="988">06:00</text><text x="479" y="988">09:00</text><text x="537" y="988">12:00</text><text x="595" y="988">15:00</text><text x="653" y="988">18:00</text><text x="711" y="988">21:00</text><text x="769" y="988" class="b">07</text><text x="827" y="988">03:00</text><text x="885" y="988">06:00</text><text x="1060" y="988">15:00</text><text x="1118" y="988">18:00</text><text x="1176" y="988">21:00</text>
</g>
<rect x="926.500" y="975.500" width="93" height="14" fill="#ffff00" stroke="#000"/><text x="928" y="987" textLength="90">07 Feb 2013 10:30</text>

<!-- bottom bar -->
<rect x="0" y="991" width="1271" height="25" fill="#b8eca4"/>
<rect x="0" y="991" width="1271" height="1" fill="#6fa862"/>
<rect x="0" y="1006" width="108" height="10" fill="#a6d894"/>
<rect x="109" y="998" width="1049" height="16" rx="3" fill="#9dd68a" stroke="#6fa862"/>
<rect x="109" y="998" width="15" height="16" rx="3" fill="url(#sc)" stroke="#6fa862"/><path d="M119 1001v10l-6-5Z" fill="#111"/>
<rect x="1143" y="998" width="15" height="16" rx="3" fill="url(#sc)" stroke="#6fa862"/><path d="M1148 1001v10l6-5Z" fill="#111"/>
<rect x="958.500" y="999.500" width="173" height="13" rx="3" fill="url(#sc)" stroke="#fff"/><path d="M1042 1003h6M1042 1005.500h6M1042 1008h6" stroke="#fff"/>
<rect x="0.500" y="1001.500" width="17" height="12" fill="#fff" stroke="#222"/><path d="M1 1002l8 6 8-6M1 1013l6-6M17 1013l-6-6" fill="none" stroke="#222"/>
<path d="M33 999h9l2 6H31Z" fill="#eee" stroke="#222"/><rect x="28.500" y="1005.500" width="17" height="7" rx="2" fill="#bbb" stroke="#222"/><rect x="31.500" y="1011" width="11" height="4" fill="#fff" stroke="#222"/>
<path d="M62 1000.500a3 3 0 0 1 6 0v3a3 3 0 0 1-6 0zM62 1009a3 3 0 0 1 6 0v3a3 3 0 0 1-6 0zM65 1000v4M65 1009v4" fill="none" stroke="#222" stroke-width="1.500"/>
<rect x="87.500" y="999.500" width="12" height="15" fill="#fff" stroke="#222"/><path d="M90 1003h7M90 1006h7M90 1009h7" stroke="#333"/><path d="M94 1000h5v4Z" fill="#e44"/><path d="M88 1014l3-4 3 4Z" fill="#1b1"/>
<rect x="1167" y="1007" width="6" height="8" fill="#e4564a" stroke="#333"/><rect x="1175" y="999" width="6" height="15" fill="#1cb81c" stroke="#333"/>
<path d="M1167 1014l8-10q-1-4 2-4l-1 2 2 1 2-2q1 4-3 4l-7 10Z" fill="#fff" stroke="#666"/>
<circle cx="1199" cy="1004" r="5.500" fill="#d8d8d8" stroke="#222" stroke-width="1.500"/><path d="M1203 1008l6 6" stroke="#000" stroke-width="3"/>
<path d="M1208 1000v11M1206 1002l2-3 2 3M1206 1009l2 3 2-3M1193 1014h9M1195 1012l-3 2 3 2M1200 1012l3 2-3 2" fill="none" stroke="#00d" stroke-width="1.200"/>
<circle cx="1227" cy="1004" r="5.500" fill="#dde6dd" stroke="#222" stroke-width="1.500"/><path d="M1224 1004h6" stroke="#00d" stroke-width="1.600"/><path d="M1231 1008l7 7" stroke="#000" stroke-width="3"/>
<circle cx="1255" cy="1004" r="5.500" fill="#dde6dd" stroke="#222" stroke-width="1.500"/><path d="M1252 1004h6M1255 1001v6" stroke="#00d" stroke-width="1.600"/><path d="M1259 1008l7 7" stroke="#000" stroke-width="3"/>
</svg>
</body></html>
